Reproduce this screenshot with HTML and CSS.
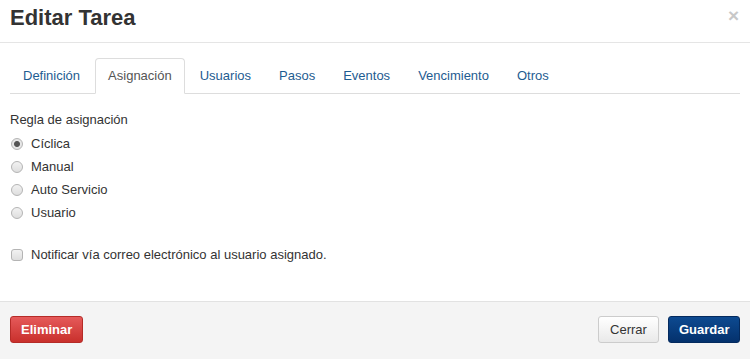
FILE: index.html
```html
<!DOCTYPE html>
<html lang="es">
<head>
    <meta charset="UTF-8">
    <title>Editar Tarea</title>
    <link rel="stylesheet" href="styles.css">
</head>
<body>
    <div class="modal">
        <div class="modal-header">
            <h3>Editar Tarea</h3>
            <span class="close">&times;</span>
        </div>
        <div class="modal-body">
            <ul class="nav-tabs">
                <li><a href="#">Definición</a></li>
                <li class="active"><a href="#">Asignación</a></li>
                <li><a href="#">Usuarios</a></li>
                <li><a href="#">Pasos</a></li>
                <li><a href="#">Eventos</a></li>
                <li><a href="#">Vencimiento</a></li>
                <li><a href="#">Otros</a></li>
            </ul>
            <div class="tab-content">
                <p class="group-label">Regla de asignación</p>
                <label class="option"><input type="radio" name="regla" checked> Cíclica</label>
                <label class="option"><input type="radio" name="regla"> Manual</label>
                <label class="option"><input type="radio" name="regla"> Auto Servicio</label>
                <label class="option"><input type="radio" name="regla"> Usuario</label>
                <label class="option notify"><input type="checkbox"> Notificar vía correo electrónico al usuario asignado.</label>
            </div>
        </div>
        <div class="modal-footer">
            <button class="btn btn-danger">Eliminar</button>
            <div class="right">
                <button class="btn btn-default">Cerrar</button>
                <button class="btn btn-primary">Guardar</button>
            </div>
        </div>
    </div>
</body>
</html>
```

FILE: styles.css
```css
* { margin: 0; padding: 0; box-sizing: border-box; }
body {
    font-family: "Liberation Sans", Arial, sans-serif;
    font-size: 13px;
    color: #333;
    background: #fff;
    width: 750px;
    height: 359px;
    overflow: hidden;
}
.modal { display: flex; flex-direction: column; height: 359px; }
.modal-header {
    display: flex;
    justify-content: space-between;
    align-items: flex-start;
    height: 43px;
    padding: 5px 10px 0 10px;
    border-bottom: 1px solid #e5e5e5;
}
.modal-header h3 { font-size: 22px; font-weight: bold; color: #333; line-height: 26px; }
.close { color: #c8c8c8; font-size: 19px; font-weight: bold; line-height: 16px; margin-top: 3px; margin-right: 1px; }
.modal-body { flex: 1; padding: 15px 10px 0 10px; }
.nav-tabs {
    list-style: none;
    display: flex;
    border-bottom: 1px solid #ddd;
    height: 36px;
}
.nav-tabs li { margin-right: 2px; margin-bottom: -1px; }
.nav-tabs a {
    display: block;
    padding: 0 12px;
    line-height: 34px;
    height: 36px;
    color: #1e5c91;
    text-decoration: none;
    border: 1px solid transparent;
    border-radius: 4px 4px 0 0;
}
.nav-tabs .active a { color: #555; background: #fff; border-color: #ddd #ddd transparent #ddd; }
.tab-content { padding-top: 17px; }
.group-label { line-height: 18px; margin-bottom: 3px; }
.option { display: flex; align-items: center; height: 23px; }
.option input {
    appearance: none;
    width: 12px;
    height: 12px;
    margin: 0 8px 0 1px;
    border: 1px solid #b4b4b4;
    background: linear-gradient(#f2f2f2, #dedede);
    flex-shrink: 0;
}
.option input[type="radio"] { border-radius: 50%; }
.option input[type="radio"]:checked {
    background: radial-gradient(circle, #555 0 2.5px, #e6e6e6 3.5px);
}
.option input[type="checkbox"] { border-radius: 3px; width: 12px; height: 12px; }
.notify { margin-top: 19px; }
.modal-footer {
    display: flex;
    justify-content: space-between;
    height: 58px;
    padding: 14px 10px 0 10px;
    background: #f4f4f4;
    border-top: 1px solid #e2e2e2;
}
.right { display: flex; gap: 9px; }
.btn {
    height: 27px;
    padding: 0 10px;
    border-radius: 3px;
    font-family: inherit;
    font-size: 13px;
    cursor: pointer;
}
.btn-danger {
    width: 73px;
    color: #fff;
    font-weight: bold;
    background: linear-gradient(#e55a5a, #c9302c);
    border: 1px solid #b52b27;
}
.btn-default {
    width: 61px;
    color: #333;
    background: linear-gradient(#fff, #e9e9e9);
    border: 1px solid #ccc;
}
.btn-primary {
    width: 72px;
    color: #fff;
    font-weight: bold;
    background: linear-gradient(#0d4a91, #04316c);
    border: 1px solid #042a5e;
}
```
